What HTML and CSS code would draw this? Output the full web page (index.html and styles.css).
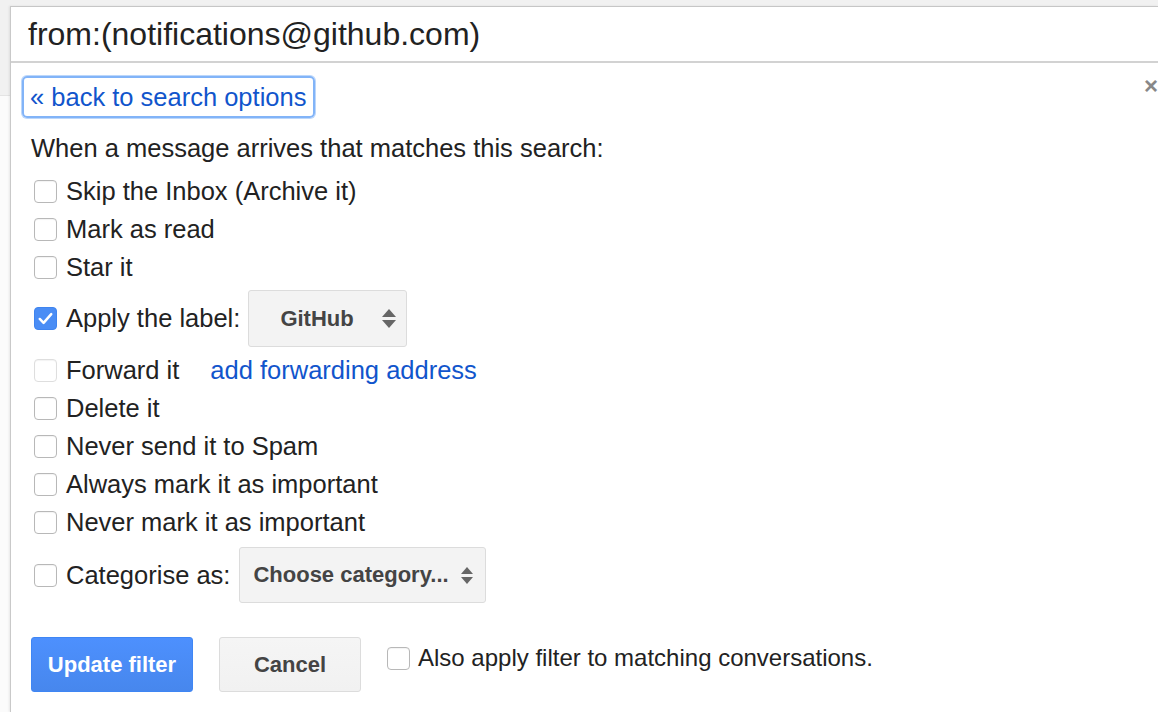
FILE: index.html
```html
<!DOCTYPE html>
<html>
<head>
<meta charset="utf-8">
<link rel="stylesheet" href="styles.css">
</head>
<body>
<div class="panel">
  <div class="search">from:(notifications@github.com)</div>
  <div class="content">
    <span class="close">×</span>
    <a class="back" href="#">« back to search options</a>
    <div class="intro">When a message arrives that matches this search:</div>
    <div class="row"><span class="cb"></span>Skip the Inbox (Archive it)</div>
    <div class="row"><span class="cb"></span>Mark as read</div>
    <div class="row"><span class="cb"></span>Star it</div>
    <div class="row row-select"><span class="cb checked"><svg viewBox="0 0 24 24" width="23" height="23"><path d="M6 12.5 L10 16.5 L18 7.5" fill="none" stroke="#fff" stroke-width="2.6" stroke-linecap="round" stroke-linejoin="round"/></svg></span>Apply the label:<span class="select label-select"><span class="sel-text">GitHub</span><span class="arrows"><span class="up"></span><span class="down"></span></span></span></div>
    <div class="row"><span class="cb disabled"></span>Forward it<a class="fwd" href="#">add forwarding address</a></div>
    <div class="row"><span class="cb"></span>Delete it</div>
    <div class="row"><span class="cb"></span>Never send it to Spam</div>
    <div class="row"><span class="cb"></span>Always mark it as important</div>
    <div class="row"><span class="cb"></span>Never mark it as important</div>
    <div class="row row-select cat"><span class="cb"></span>Categorise as:<span class="select cat-select"><span class="sel-text">Choose category...</span><span class="arrows"><span class="up"></span><span class="down"></span></span></span></div>
    <div class="actions">
      <button class="btn primary">Update filter</button>
      <button class="btn">Cancel</button>
      <span class="also"><span class="cb"></span>Also apply filter to matching conversations.</span>
    </div>
  </div>
</div>
</body>
</html>
```

FILE: styles.css
```css
html, body {
  margin: 0;
  padding: 0;
}
body {
  width: 1158px;
  height: 712px;
  overflow: hidden;
  font-family: "Liberation Sans", Arial, Helvetica, sans-serif;
  color: #222;
  background:
    linear-gradient(#e4e4e4, #e4e4e4) no-repeat 0 95px / 10px 1px,
    linear-gradient(#f1f1f1, #f1f1f1) no-repeat 0 0 / 100% 95px,
    #fbfbfb;
}
.panel {
  margin: 6px 0 0 10px;
  background: #fff;
  border-left: 1px solid #c9c9c9;
  box-shadow: -1px 0 2px rgba(0,0,0,0.08);
  height: 706px;
}
.search {
  height: 54px;
  border-top: 1px solid #c6c6c6;
  border-bottom: 2px solid #d2d2d2;
  padding-left: 17px;
  font-size: 32px;
  line-height: 54px;
  color: #222;
  white-space: nowrap;
}
.content {
  position: relative;
  padding: 13px 0 0 20px;
}
.close {
  position: absolute;
  right: 0;
  top: 10px;
  font-size: 24px;
  line-height: 26px;
  font-weight: bold;
  color: #888;
}
.back {
  display: inline-block;
  margin-left: -9px;
  padding: 3px 7px 3px 6px;
  border: 2px solid #82b4f8;
  box-shadow: 0 0 0 1px #bcd7fb;
  border-radius: 5px;
  font-size: 25.5px;
  line-height: 32px;
  color: #1155cc;
  text-decoration: none;
  vertical-align: top;
}
.intro {
  margin-top: 11px;
  font-size: 25.5px;
  line-height: 38px;
  margin-bottom: 5px;
}
.row {
  display: flex;
  align-items: center;
  height: 38px;
  font-size: 25.5px;
  margin-left: 3px;
  white-space: nowrap;
}
.cb {
  display: inline-block;
  box-sizing: border-box;
  width: 23px;
  height: 23px;
  border: 1px solid #b8b8b8;
  border-radius: 4px;
  background: #fff;
  box-shadow: inset 0 1px 1px rgba(0,0,0,0.05);
  margin-right: 9px;
  flex: none;
}
.cb.checked {
  background: #4a8df5;
  border-color: #3f84ef;
  box-shadow: none;
}
.cb.checked svg {
  display: block;
  margin: -1px;
}
.cb.disabled {
  border-color: #dedede;
}
.row-select {
  height: 57px;
  padding: 4px 0;
}
.row-select.cat {
  padding: 6px 0 0;
  height: 56px;
}
.select {
  box-sizing: border-box;
  display: inline-flex;
  align-items: center;
  height: 57px;
  margin-left: 8px;
  background: #f3f3f3;
  border: 1px solid #dcdcdc;
  border-radius: 3px;
  font-size: 22px;
  font-weight: bold;
  color: #444;
}
.cat-select {
  height: 56px;
  margin-left: 9px;
}
.label-select {
  width: 159px;
  padding-left: 31px;
}
.label-select .sel-text {
  width: 102px;
}
.cat-select {
  width: 247px;
  padding-left: 13px;
}
.cat-select .sel-text {
  width: 208px;
}
.arrows {
  display: flex;
  flex-direction: column;
  gap: 3px;
}
.up, .down {
  display: block;
  width: 0;
  height: 0;
  border-left: 7px solid transparent;
  border-right: 7px solid transparent;
}
.up { border-bottom: 8px solid #666; }
.down { border-top: 8px solid #666; }
.cat-select .up, .cat-select .down {
  border-left-width: 6px;
  border-right-width: 6px;
}
.cat-select .up { border-bottom-width: 7px; }
.cat-select .down { border-top-width: 7px; }
.fwd {
  margin-left: 31px;
  color: #1155cc;
  text-decoration: none;
}
.actions {
  display: flex;
  align-items: flex-start;
  margin-top: 34px;
  margin-left: 0;
}
.btn {
  box-sizing: border-box;
  height: 55px;
  min-width: 142px;
  padding: 0 10px;
  margin-right: 26px;
  font-family: "Liberation Sans", Arial, sans-serif;
  font-size: 22px;
  font-weight: bold;
  color: #444;
  white-space: nowrap;
  background: linear-gradient(#f5f5f5, #f1f1f1);
  border: 1px solid #dcdcdc;
  border-radius: 3px;
}
.btn.primary {
  width: 162px;
  color: #fff;
  background: linear-gradient(#4d90fe, #4787ed);
  border-color: #3f86f4;
}
.also {
  display: flex;
  align-items: center;
  height: 44px;
  font-size: 24px;
  white-space: nowrap;
  margin-top: -1px;
}
.also .cb {
  margin-right: 8px;
}
```
